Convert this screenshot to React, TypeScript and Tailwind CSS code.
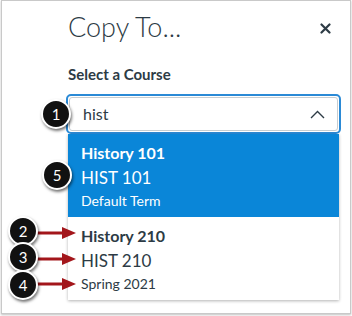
import React from 'react';

type Course = { name: string; code: string; term: string; active?: boolean };

const courses: Course[] = [
  { name: 'History 101', code: 'HIST 101', term: 'Default Term', active: true },
  { name: 'History 210', code: 'HIST 210', term: 'Spring 2021' },
];

// 注釈の丸番号
const Badge = ({ n, className }: { n: number; className: string }) => (
  <div
    className={`absolute w-[30px] h-[30px] rounded-full bg-[#111] border-2 border-white flex items-center justify-center text-white text-[15px] shadow-[1px_2px_3px_rgba(0,0,0,0.55)] ${className}`}
  >
    {n}
  </div>
);

// 赤い矢印
const Arrow = ({ className }: { className: string }) => (
  <svg className={`absolute ${className}`} width="40" height="14" viewBox="0 0 40 14">
    <line x1="0" y1="7" x2="28" y2="7" stroke="#a3161b" strokeWidth="3" />
    <polygon points="26,1 40,7 26,13" fill="#a3161b" />
  </svg>
);

export default function App() {
  return (
    <div className="w-[352px] h-[316px] bg-white relative" style={{ fontFamily: 'Lato, "Open Sans", sans-serif' }}>
      <div className="ml-[1px] w-[350px] h-[314px] border border-[#c9c9c9] shadow-[0_1px_2px_rgba(0,0,0,0.25)] pl-[66px] pr-[9px] pt-[10px] text-[#2d3b45]">
        <div className="flex items-center justify-between h-[30px]">
          <h1 className="text-[27px] font-light leading-none">Copy To...</h1>
          <svg width="11" height="11" viewBox="0 0 11 11" className="mr-[10px] mt-[4px]">
            <path d="M1.5 1.5 L9.5 9.5 M9.5 1.5 L1.5 9.5" stroke="#2d3b45" strokeWidth="2.2" strokeLinecap="round" />
          </svg>
        </div>

        <div className="mt-[24px] text-[15px] font-bold leading-[18px]">Select a Course</div>

        <div className="mt-[11px] -ml-[2px] h-[40px] rounded-[5px] border-2 border-[#2b8ad6] p-[1px]">
          <div className="h-full rounded-[3px] border border-[#c7cdd1] flex items-center justify-between pl-[13px] pr-[12px]">
            <span className="text-[16px]">hist</span>
            <svg width="15" height="9" viewBox="0 0 15 9">
              <path d="M1 8 L7.5 1.5 L14 8" fill="none" stroke="#2d3b45" strokeWidth="1.4" />
            </svg>
          </div>
        </div>

        <div className="mr-[2px] bg-white shadow-[0_1px_3px_rgba(0,0,0,0.3)]">
          {courses.map((c) => (
            <div
              key={c.code}
              className={`px-[13px] pt-[7px] pb-[8px] ${c.active ? 'bg-[#0a86d8] text-white' : 'text-[#2d3b45]'}`}
            >
              <div className="h-[24px] flex items-center text-[16px] font-bold">{c.name}</div>
              <div className="h-[26px] flex items-center text-[17px]">{c.code}</div>
              <div className="h-[18px] flex items-center text-[14px]">{c.term}</div>
            </div>
          ))}
        </div>
      </div>

      <Badge n={1} className="left-[41px] top-[99px]" />
      <Badge n={5} className="left-[42px] top-[160px]" />

      <Arrow className="left-[36px] top-[226px]" />
      <Arrow className="left-[36px] top-[252px]" />
      <Arrow className="left-[36px] top-[277px]" />
      <Badge n={2} className="left-[8px] top-[216px]" />
      <Badge n={3} className="left-[8px] top-[242px]" />
      <Badge n={4} className="left-[8px] top-[270px]" />
    </div>
  );
}
